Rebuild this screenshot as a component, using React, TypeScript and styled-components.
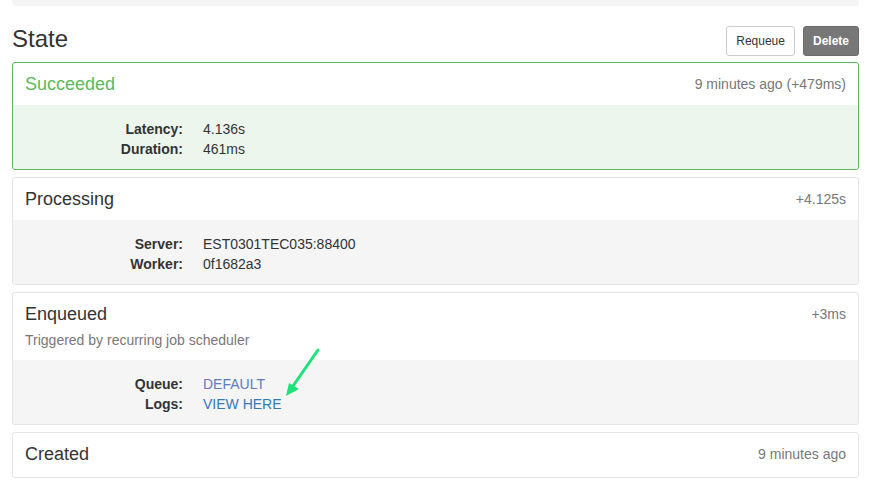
import React from "react";
import styled, { createGlobalStyle } from "styled-components";

const Global = createGlobalStyle`
  html, body { margin: 0; padding: 0; background: #fff; }
  body {
    font-family: "Liberation Sans", Arial, Helvetica, sans-serif;
    font-size: 14px;
    line-height: 1.42857;
    color: #333;
  }
  * { box-sizing: border-box; }
`;

const Page = styled.div`
  padding: 0 12px;
`;

const PrevBlock = styled.div`
  height: 6px;
  background: #f5f5f5;
  border-radius: 0 0 4px 4px;
`;

const HeaderRow = styled.div`
  display: flex;
  align-items: center;
  justify-content: space-between;
  margin: 20px 0 6px;
  height: 30px;
`;

const Heading = styled.h3`
  margin: 0 0 4px;
  font-size: 24px;
  font-weight: 400;
  line-height: 1.1;
  color: #333;
`;

const Actions = styled.div`
  display: flex;
  gap: 8px;
`;

const Button = styled.button<{ $variant?: "default" | "dark" }>`
  font-family: inherit;
  font-size: 12px;
  line-height: 1.5;
  padding: 5px 9px;
  height: 30px;
  border-radius: 3px;
  cursor: pointer;
  border: 1px solid ${(p) => (p.$variant === "dark" ? "#6b6b6b" : "#ccc")};
  background: ${(p) => (p.$variant === "dark" ? "#777" : "#fff")};
  color: ${(p) => (p.$variant === "dark" ? "#fff" : "#333")};
  font-weight: ${(p) => (p.$variant === "dark" ? 700 : 400)};
`;

const Card = styled.div<{ $accent?: string }>`
  position: relative;
  margin-bottom: 7px;
  padding: 12px;
  background: #fff;
  border: 1px solid ${(p) => p.$accent || "#e5e5e5"};
  border-radius: 3px;
`;

const CardTitle = styled.div`
  display: flex;
  justify-content: space-between;
  align-items: flex-start;
  height: 20px;
`;

const TitleText = styled.h4<{ $color?: string }>`
  margin: 0;
  font-size: 18px;
  font-weight: 400;
  line-height: 18px;
  color: ${(p) => p.$color || "#333"};
`;

const Timing = styled.span`
  font-size: 14px;
  line-height: 18px;
  color: #777;
`;

const Subtitle = styled.p`
  margin: 5px 0 0;
  color: #777;
  font-size: 14px;
  line-height: 20px;
`;

const CardBody = styled.div<{ $bg?: string }>`
  margin: 10px -12px -12px -12px;
  padding: 9px 10px 10px;
  background: ${(p) => p.$bg || "#f5f5f5"};
  border-radius: 0 0 3px 3px;
`;

const DL = styled.dl`
  display: grid;
  grid-template-columns: 160px 1fr;
  grid-auto-rows: 20px;
  column-gap: 20px;
  margin: 5px 0 0;
  line-height: 20px;
`;

const DT = styled.dt`
  text-align: right;
  font-weight: 700;
`;

const DD = styled.dd`
  margin: 0;
`;

const Link = styled.a<{ $visited?: boolean }>`
  color: ${(p) => (p.$visited ? "#5c7cba" : "#337ab7")};
  text-decoration: none;
`;

const Arrow = styled.svg`
  position: absolute;
  left: 268px;
  top: 52px;
  width: 45px;
  height: 55px;
  overflow: visible;
`;

type Row = { label: string; value: React.ReactNode };

const Details = ({ rows }: { rows: Row[] }) => (
  <DL>
    {rows.map((r) => (
      <React.Fragment key={r.label}>
        <DT>{r.label}</DT>
        <DD>{r.value}</DD>
      </React.Fragment>
    ))}
  </DL>
);

export default function App() {
  return (
    <>
      <Global />
      <Page>
        <PrevBlock />
        <HeaderRow>
          <Heading>State</Heading>
          <Actions>
            <Button>Requeue</Button>
            <Button $variant="dark">Delete</Button>
          </Actions>
        </HeaderRow>

        <Card $accent="#5cb85c">
          <CardTitle>
            <TitleText $color="#5cb85c">Succeeded</TitleText>
            <Timing>9 minutes ago (+479ms)</Timing>
          </CardTitle>
          <CardBody $bg="#edf6ec">
            <Details
              rows={[
                { label: "Latency:", value: "4.136s" },
                { label: "Duration:", value: "461ms" },
              ]}
            />
          </CardBody>
        </Card>

        <Card>
          <CardTitle>
            <TitleText>Processing</TitleText>
            <Timing>+4.125s</Timing>
          </CardTitle>
          <CardBody>
            <Details
              rows={[
                { label: "Server:", value: "EST0301TEC035:88400" },
                { label: "Worker:", value: "0f1682a3" },
              ]}
            />
          </CardBody>
        </Card>

        <Card>
          <CardTitle>
            <TitleText>Enqueued</TitleText>
            <Timing>+3ms</Timing>
          </CardTitle>
          <Subtitle>Triggered by recurring job scheduler</Subtitle>
          <CardBody>
            <Details
              rows={[
                { label: "Queue:", value: <Link $visited href="#">DEFAULT</Link> },
                { label: "Logs:", value: <Link href="#">VIEW HERE</Link> },
              ]}
            />
          </CardBody>
          <Arrow viewBox="0 0 45 55">
            <line x1="37" y1="5" x2="12" y2="41" stroke="#1de27a" strokeWidth="3" strokeLinecap="round" />
            <polygon points="5,51 8,38 18,44" fill="#1de27a" />
          </Arrow>
        </Card>

        <Card>
          <CardTitle>
            <TitleText>Created</TitleText>
            <Timing>9 minutes ago</Timing>
          </CardTitle>
        </Card>
      </Page>
    </>
  );
}
